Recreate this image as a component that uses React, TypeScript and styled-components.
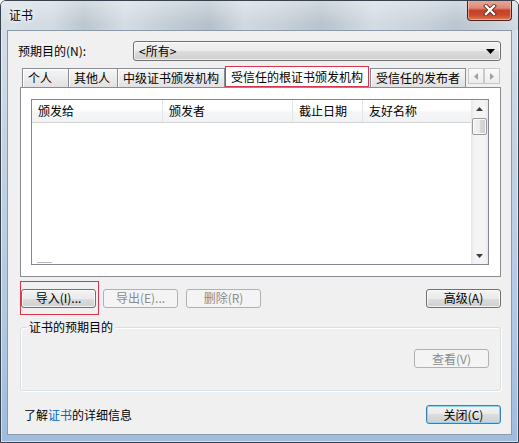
import React from "react";
import styled, { createGlobalStyle, css } from "styled-components";

const GlobalStyle = createGlobalStyle`
  html, body { margin: 0; padding: 0; background: #ffffff; }
  body {
    font-family: "Noto Sans CJK SC", "Liberation Sans", sans-serif;
    font-size: 12px;
    color: #000;
  }
  * { box-sizing: border-box; }
`;

const Window = styled.div`
  width: 519px;
  height: 443px;
  display: flex;
  flex-direction: column;
  border: 1px solid #37424e;
  border-radius: 6px 6px 0 0;
  overflow: hidden;
  background:
    linear-gradient(180deg, rgba(255,255,255,0.55) 0px, rgba(255,255,255,0) 28px),
    linear-gradient(180deg, #d9e1ea 0%, #c5d4e4 30%, #b2c9e2 70%, #9fbcdd 100%);
  box-shadow: inset 0 0 0 1px rgba(255, 255, 255, 0.55);
`;

const TitleBar = styled.div`
  height: 29px;
  flex: 0 0 29px;
  display: flex;
  align-items: flex-start;
  padding-left: 8px;
  background:
    linear-gradient(180deg, rgba(255,255,255,0.35), rgba(255,255,255,0) 80%),
    linear-gradient(90deg, #d7dfe7 0%, #d2dae2 10%, #bcc6cf 16%, #d4dce4 24%, #c2ccd5 33%,
      #b5c0ca 40%, #d0d8e0 47%, #c6cfd8 55%, #b9c3cd 62%, #d3dbe3 72%, #c8d1da 82%, #bac5d0 88%, #d2dae3 100%);
`;

const Title = styled.div`
  margin-top: 6px;
  font-size: 12px;
  line-height: 16px;
  color: #000;
  text-shadow: 0 0 4px #fff, 0 0 6px #fff;
`;

const CloseButton = styled.div`
  margin-left: auto;
  margin-right: 6px;
  margin-top: -1px;
  width: 45px;
  height: 21px;
  border: 1px solid #4c2219;
  border-top: none;
  border-radius: 0 0 4px 4px;
  display: flex;
  align-items: center;
  justify-content: center;
  background: linear-gradient(180deg, #e9a99b 0%, #dd8a78 40%, #c4412a 52%, #c94a2e 75%, #dd7a55 100%);
  box-shadow: inset 0 0 0 1px rgba(255, 210, 200, 0.55);
`;

const Client = styled.div`
  flex: 1;
  margin: 0 6px 7px 6px;
  border: 1px solid #8b99a8;
  background: #f0f0f0;
  display: flex;
  flex-direction: column;
  padding: 0 10px 0 12px;
`;

const PurposeRow = styled.div`
  margin-top: 10px;
  height: 20px;
  display: flex;
  align-items: center;
`;

const Label = styled.div`
  flex: 0 0 115px;
  margin-left: -2px;
  line-height: 16px;
`;

const ComboBox = styled.div`
  flex: 1;
  height: 20px;
  border: 1px solid #707070;
  border-radius: 3px;
  background: linear-gradient(180deg, #f2f2f2 0%, #ebebeb 50%, #dddddd 50%, #cfcfcf 100%);
  box-shadow: inset 0 0 0 1px rgba(255, 255, 255, 0.7);
  display: flex;
  align-items: center;
  padding: 0 5px 0 5px;
`;

const ComboText = styled.span`
  flex: 1;
  line-height: 16px;
`;

const TabStrip = styled.div`
  margin-top: 5px;
  height: 21px;
  display: flex;
  align-items: flex-end;
  padding-left: 2px;
`;

const Tab = styled.div<{ $w: number; $selected?: boolean }>`
  width: ${(p) => p.$w}px;
  flex: 0 0 ${(p) => p.$w}px;
  height: ${(p) => (p.$selected ? 21 : 19)}px;
  padding-left: 5px;
  white-space: nowrap;
  overflow: hidden;
  display: flex;
  align-items: center;
  line-height: 16px;
  ${(p) =>
    p.$selected
      ? css`
          border: 1px solid #d8344c;
          background: #ffffff;
          margin: 0 1px 0 1px;
        `
      : css`
          border: 1px solid #898c95;
          border-bottom: none;
          margin-right: -1px;
          background: linear-gradient(180deg, #f6f6f6 0%, #ececec 50%, #e1e1e1 100%);
          box-shadow: inset 1px 1px 0 #ffffff;
        `}
`;

const TabScroll = styled.div`
  margin-left: 3px;
  align-self: flex-start;
  margin-top: 2px;
  display: flex;
`;

const TabScrollBtn = styled.div`
  width: 16px;
  height: 16px;
  border: 1px solid #c9c9c9;
  background: linear-gradient(180deg, #fafafa, #ececec);
  display: flex;
  align-items: center;
  justify-content: center;
`;

const Panel = styled.div`
  height: 190px;
  border: 1px solid #898c95;
  background: #ffffff;
  padding: 11px 11px 11px 10px;
  display: flex;
`;

const ListView = styled.div`
  flex: 1;
  border: 1px solid #828790;
  display: flex;
  background: #ffffff;
`;

const ListMain = styled.div`
  flex: 1;
  display: flex;
  flex-direction: column;
`;

const Header = styled.div`
  height: 23px;
  display: flex;
  background: linear-gradient(180deg, #ffffff 0%, #ffffff 45%, #f5f6f7 55%, #f1f2f4 100%);
  border-bottom: 1px solid #d5d5d5;
`;

const HeaderCol = styled.div<{ $w?: number }>`
  ${(p) => (p.$w ? `flex: 0 0 ${p.$w}px;` : "flex: 1;")}
  padding-left: 6px;
  display: flex;
  align-items: center;
  line-height: 16px;
  border-right: 1px solid #e3e5e7;
  &:last-child { border-right: none; }
`;

const ListBody = styled.div`
  flex: 1;
  display: flex;
  flex-direction: column;
  justify-content: flex-end;
`;

const FocusMark = styled.div`
  width: 15px;
  height: 1px;
  margin: 0 0 1px 5px;
  background: #b8b8b8;
`;

const VScroll = styled.div`
  flex: 0 0 17px;
  display: flex;
  flex-direction: column;
  background: linear-gradient(90deg, #e6e6e6 0%, #f4f4f4 20%, #f4f4f4 80%, #e9e9e9 100%);
`;

const ScrollArrow = styled.div`
  height: 17px;
  display: flex;
  align-items: center;
  justify-content: center;
`;

const Thumb = styled.div`
  height: 17px;
  margin: 1px 1px 0 1px;
  border: 1px solid #9a9a9a;
  border-radius: 2px;
  background: linear-gradient(90deg, #f2f2f2 0%, #ebebeb 50%, #d9d9d9 50%, #d0d0d0 100%);
  box-shadow: inset 0 0 0 1px rgba(255, 255, 255, 0.8);
`;

const Track = styled.div`
  flex: 1;
`;

const ButtonRow = styled.div`
  margin-top: 4px;
  height: 34px;
  display: flex;
  align-items: center;
`;

const AnnotationBox = styled.div`
  height: 34px;
  border: 1px solid #d8344c;
  padding: 0 2px 0 0;
  display: flex;
  align-items: center;
  margin-right: 4px;
`;

const Button = styled.div<{ $disabled?: boolean; $default?: boolean; $ml?: number }>`
  width: 75px;
  height: 19px;
  flex: 0 0 75px;
  margin-left: ${(p) => p.$ml ?? 0}px;
  border: 1px solid ${(p) => (p.$disabled ? "#adb2b5" : p.$default ? "#3c7fb1" : "#707070")};
  border-radius: 3px;
  display: flex;
  align-items: center;
  justify-content: center;
  line-height: 16px;
  white-space: nowrap;
  color: ${(p) => (p.$disabled ? "#8b8b8b" : "#000")};
  background: ${(p) =>
    p.$disabled
      ? "#f4f4f4"
      : "linear-gradient(180deg, #f2f2f2 0%, #ebebeb 50%, #dddddd 50%, #cfcfcf 100%)"};
  box-shadow: ${(p) =>
    p.$disabled
      ? "none"
      : p.$default
      ? "inset 0 0 0 1px #8fd3f2"
      : "inset 0 0 0 1px rgba(255,255,255,0.75)"};
`;

const Spacer = styled.div`
  flex: 1;
`;

const GroupBox = styled.div`
  margin-top: 12px;
  height: 64px;
  border: 1px solid #d5dfe5;
  border-radius: 3px;
  box-shadow: inset 1px 1px 0 #ffffff, 1px 1px 0 #ffffff;
  display: flex;
  flex-direction: column;
  padding: 0 11px 0 6px;
`;

const Legend = styled.div`
  align-self: flex-start;
  margin-top: -9px;
  padding: 0 2px;
  background: #f0f0f0;
  line-height: 16px;
`;

const GroupActions = styled.div`
  margin-top: 14px;
  display: flex;
  justify-content: flex-end;
`;

const Footer = styled.div`
  margin-top: 14px;
  height: 19px;
  display: flex;
  align-items: center;
  padding-left: 4px;
`;

const FooterText = styled.div`
  line-height: 16px;
`;

const Link = styled.span`
  color: #0066cc;
`;

const Tri = ({ dir, color = "#333" }: { dir: "up" | "down" | "left" | "right"; color?: string }) => {
  const pts =
    dir === "up"
      ? "0,4 3.5,0 7,4"
      : dir === "down"
      ? "0,0 7,0 3.5,4"
      : dir === "left"
      ? "4,0 4,7 0,3.5"
      : "0,0 0,7 4,3.5";
  const w = dir === "up" || dir === "down" ? 7 : 4;
  const h = dir === "up" || dir === "down" ? 4 : 7;
  return (
    <svg width={w} height={h} viewBox={`0 0 ${w} ${h}`}>
      <polygon points={pts} fill={color} />
    </svg>
  );
};

export default function App() {
  return (
    <>
      <GlobalStyle />
      <Window>
        <TitleBar>
          <Title>证书</Title>
          <CloseButton>
            <svg width="14" height="12" viewBox="0 0 14 12">
              <path d="M3 2 L11 10 M11 2 L3 10" stroke="#5a2418" strokeWidth="4" strokeLinecap="square" />
              <path d="M3 2 L11 10 M11 2 L3 10" stroke="#ffffff" strokeWidth="2.4" strokeLinecap="square" />
            </svg>
          </CloseButton>
        </TitleBar>
        <Client>
          <PurposeRow>
            <Label>预期目的(N):</Label>
            <ComboBox>
              <ComboText>&lt;所有&gt;</ComboText>
              <svg width="9" height="5" viewBox="0 0 9 5">
                <polygon points="0,0 9,0 4.5,5" fill="#000" />
              </svg>
            </ComboBox>
          </PurposeRow>
          <TabStrip>
            <Tab $w={47}>个人</Tab>
            <Tab $w={50}>其他人</Tab>
            <Tab $w={108}>中级证书颁发机构</Tab>
            <Tab $w={144} $selected>受信任的根证书颁发机构</Tab>
            <Tab $w={96}>受信任的发布者</Tab>
            <TabScroll>
              <TabScrollBtn>
                <Tri dir="left" color="#a0a0a0" />
              </TabScrollBtn>
              <TabScrollBtn>
                <Tri dir="right" color="#a0a0a0" />
              </TabScrollBtn>
            </TabScroll>
          </TabStrip>
          <Panel>
            <ListView>
              <ListMain>
                <Header>
                  <HeaderCol $w={131}>颁发给</HeaderCol>
                  <HeaderCol $w={130}>颁发者</HeaderCol>
                  <HeaderCol $w={70}>截止日期</HeaderCol>
                  <HeaderCol>友好名称</HeaderCol>
                </Header>
                <ListBody>
                  <FocusMark />
                </ListBody>
              </ListMain>
              <VScroll>
                <ScrollArrow>
                  <Tri dir="up" color="#3c3c3c" />
                </ScrollArrow>
                <Thumb />
                <Track />
                <ScrollArrow>
                  <Tri dir="down" color="#3c3c3c" />
                </ScrollArrow>
              </VScroll>
            </ListView>
          </Panel>
          <ButtonRow>
            <AnnotationBox>
              <Button>导入(I)...</Button>
            </AnnotationBox>
            <Button $disabled>导出(E)...</Button>
            <Button $disabled $ml={8}>删除(R)</Button>
            <Spacer />
            <Button>高级(A)</Button>
          </ButtonRow>
          <GroupBox>
            <Legend>证书的预期目的</Legend>
            <GroupActions>
              <Button $disabled>查看(V)</Button>
            </GroupActions>
          </GroupBox>
          <Footer>
            <FooterText>
              了解<Link>证书</Link>的详细信息
            </FooterText>
            <Spacer />
            <Button $default>关闭(C)</Button>
          </Footer>
        </Client>
      </Window>
    </>
  );
}
